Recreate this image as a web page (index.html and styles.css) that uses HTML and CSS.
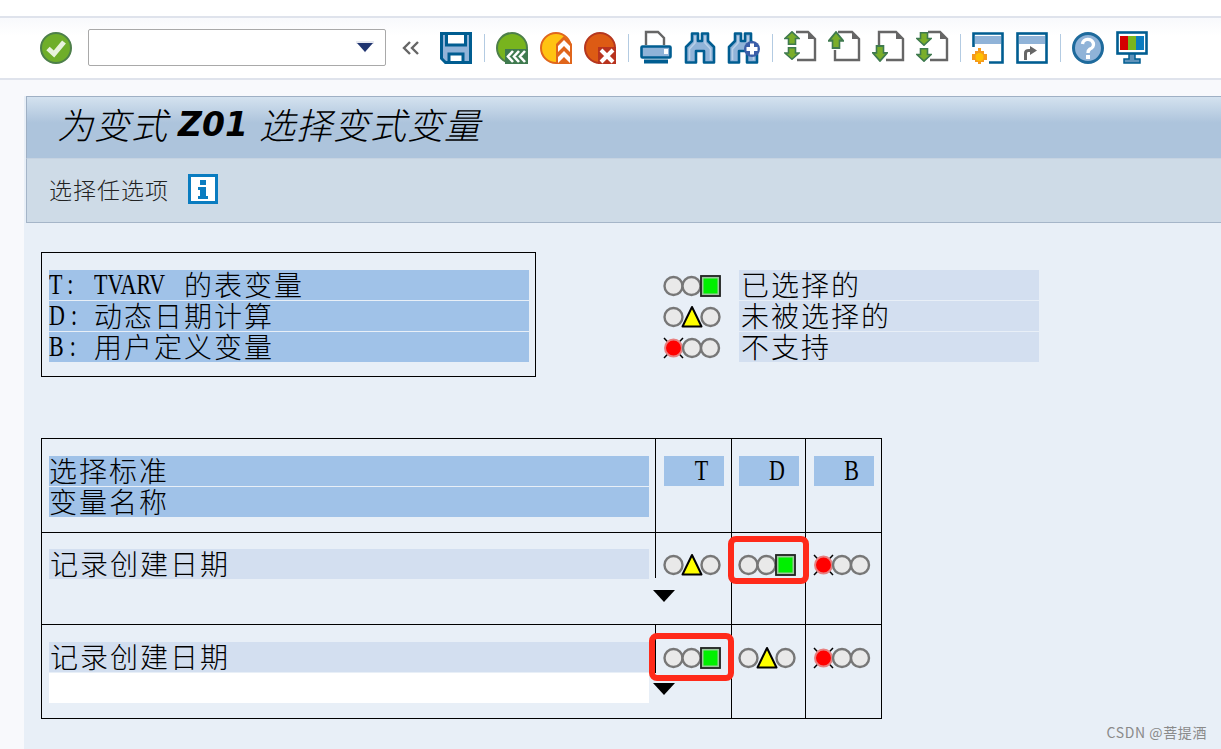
FILE: index.html
```html
<!DOCTYPE html>
<html lang="zh">
<head>
<meta charset="utf-8">
<title>为变式 Z01 选择变式变量</title>
<link rel="stylesheet" href="styles.css">
</head>
<body>
<svg class="defs" width="0" height="0" aria-hidden="true">
  <defs>
    <symbol id="up" viewBox="0 0 16 14" preserveAspectRatio="none"><path d="M8 .8 15.2 7.5H11.500V13.200H4.500V7.500H.8Z" fill="#7aae2a" stroke="#3f7a4f" stroke-width="1.6"/></symbol>
    <symbol id="down" viewBox="0 0 16 14" preserveAspectRatio="none"><path d="M8 13.2 15.2 6.5H11.500V.8H4.500V6.500H.8Z" fill="#7aae2a" stroke="#3f7a4f" stroke-width="1.6"/></symbol>
    <symbol id="binoc" viewBox="0 0 32 32"><path d="M8 1.500H14V9H18V1.500H24V9L30 15V30.500H20V19H12V30.500H2V15L8 9Z" fill="#90b3d8" stroke="#005d91" stroke-width="2.600" stroke-linejoin="round"/><path d="M11 4V11L5.500 17V28M21 4V11L26.500 17V28" fill="none" stroke="#b9d0e8" stroke-width="1.600"/></symbol>
    <symbol id="light-green" viewBox="0 0 58 24"><circle cx="10.500" cy="12" r="9" class="lamp"/><circle cx="28.500" cy="12" r="9" class="lamp"/><rect x="39" y="3" width="17" height="18" fill="#00f000" stroke="#9cc79c" stroke-width="3"/><rect x="38" y="2" width="19" height="20" fill="none" stroke="#222" stroke-width="1.800"/></symbol>
    <symbol id="light-yellow" viewBox="0 0 58 24"><circle cx="10.500" cy="12" r="9" class="lamp"/><circle cx="47.500" cy="12" r="9" class="lamp"/><path d="M29 2 38.500 21.500H19.500Z" fill="#ffff00" stroke="#000" stroke-width="2" stroke-linejoin="round"/></symbol>
    <symbol id="light-red" viewBox="0 0 58 24"><path d="M1 2 20 22M20 2 1 22" stroke="#000" stroke-width="1.500"/><circle cx="10.500" cy="12" r="8.500" fill="#ff0000" stroke="#e88080" stroke-width="2"/><circle cx="29" cy="12" r="9" class="lamp"/><circle cx="47" cy="12" r="9" class="lamp"/></symbol>
  </defs>
</svg>

<header class="toolbar">
  <svg class="ic" viewBox="0 0 32 32"><circle cx="16" cy="16" r="15" fill="#6fae2a" stroke="#4d7f4a" stroke-width="2"/><path d="M8 16.500 14 22 24 10" fill="none" stroke="#e9f3dd" stroke-width="5"/></svg>
  <div class="command">
    <svg class="drop" viewBox="0 0 18 12"><path d="M0 0H18V3H14L9 12 4 3H0Z" fill="#e7e9f0"/><path d="M1 2H17L9 11Z" fill="#1f3470"/></svg>
  </div>
  <svg class="back2" viewBox="0 0 18 14"><path d="M8 1 2 7 8 13M16 1 10 7 16 13" fill="none" stroke="#666" stroke-width="2.400"/></svg>
  <svg class="ic save" viewBox="0 0 32 32"><path d="M1.500 1.500H30.500V30.500H5.500L1.500 26.500Z" fill="#90b3d8" stroke="#005d91" stroke-width="3"/><path d="M6.500 1.500H25.500V13H6.500Z" fill="#fff" stroke="#005d91" stroke-width="3"/><path d="M9 22H23V30.500H9Z" fill="#fff" stroke="#005d91" stroke-width="3"/></svg>
  <span class="sep"></span>
  <svg class="ic" viewBox="0 0 32 32"><circle cx="16" cy="16" r="15" fill="#78b41e" stroke="#4d7f4a" stroke-width="2"/><path d="M9 17H32V32H9Z" fill="#3f7a4f"/><path d="M17 19 12 24.500 17 30M23 19 18 24.500 23 30M29 19 24 24.500 29 30" fill="none" stroke="#fff" stroke-width="2.600"/></svg>
  <svg class="ic" viewBox="0 0 32 32"><circle cx="16" cy="16" r="15" fill="#ffc312" stroke="#e0661c" stroke-width="2"/><path d="M16 12 24 4 32 12V32H16Z" fill="#e0661c"/><path d="M24 8 18 14V20L24 14 30 20V14ZM24 19 18 25V31L24 25 30 31V25Z" fill="#fff"/></svg>
  <svg class="ic" viewBox="0 0 32 32"><circle cx="16" cy="16" r="15" fill="#dd5b14" stroke="#b5371f" stroke-width="2"/><path d="M14 15H32V32H14Z" fill="#b8331e"/><path d="M17 18 29 30M29 18 17 30" stroke="#fff" stroke-width="4"/></svg>
  <span class="sep"></span>
  <svg class="ic" viewBox="0 0 32 32"><path d="M6 13V0H18L24 6V13" fill="none" stroke="#666" stroke-width="2.400"/><rect x="1.500" y="14.500" width="29" height="11" rx="1" fill="#90b3d8" stroke="#005d91" stroke-width="2.600"/><rect x="24" y="17" width="4" height="5" fill="#fff"/><rect x="4" y="27.500" width="24" height="4" fill="#005d91"/></svg>
  <svg class="ic"><use href="#binoc"/></svg>
  <svg class="ic" viewBox="0 0 32 32"><use href="#binoc" x="-1" y="0" width="32" height="32"/><circle cx="24" cy="17" r="8" fill="#3a5ea8"/><path d="M22 11.500h4v3.500h3.500v4H26v3.500h-4V19h-3.500v-4H22z" fill="#fff"/></svg>
  <span class="sep"></span>
  <svg class="ic" viewBox="0 0 32 32"><path d="M12 0H24L31 7V28H13" fill="none" stroke="#666" stroke-width="2.400"/><path d="M24 0 31 7H24Z" fill="#666"/><use href="#up" x="0" y="-1" width="16" height="14"/><use href="#down" x="0" y="15" width="16" height="13"/></svg>
  <svg class="ic" viewBox="0 0 32 32"><path d="M10 0H24L31 7V28H7V18" fill="none" stroke="#666" stroke-width="2.400"/><path d="M24 0 31 7H24Z" fill="#666"/><use href="#up" x="0" y="-1" width="16" height="18"/></svg>
  <svg class="ic" viewBox="0 0 32 32"><path d="M7 13V0H24L31 7V28H14" fill="none" stroke="#666" stroke-width="2.400"/><path d="M24 0 31 7H24Z" fill="#666"/><use href="#down" x="0" y="13" width="16" height="17"/></svg>
  <svg class="ic" viewBox="0 0 32 32"><path d="M12 0H24L31 7V28H14" fill="none" stroke="#666" stroke-width="2.400"/><path d="M24 0 31 7H24Z" fill="#666"/><use href="#down" x="0" y="0" width="16" height="14"/><use href="#down" x="0" y="16" width="16" height="14"/></svg>
  <span class="sep"></span>
  <svg class="ic" viewBox="0 0 32 32"><path d="M1.500 15V1.500H30.500V30.500H17" fill="none" stroke="#005d91" stroke-width="2.600"/><rect x="3" y="4" width="26" height="8" fill="#90b3d8"/><path d="M6 16h3v3h3v3h3v6h-3v2H9v2H6v-2H3v-2H0v-6h3v-3h3z" fill="#f59a1c"/><circle cx="7.500" cy="25" r="4" fill="#ffc000"/></svg>
  <svg class="ic" viewBox="0 0 32 32"><rect x="1.500" y="1.500" width="29" height="29" fill="#fff" stroke="#005d91" stroke-width="2.600"/><rect x="3" y="4" width="26" height="8" fill="#90b3d8"/><path d="M8 28V21Q8 17 13 17H14V14L21 18.500 14 23V20H12Q11 20 11 22V28Z" fill="#666"/></svg>
  <span class="sep"></span>
  <svg class="ic" viewBox="0 0 32 32"><circle cx="16" cy="16" r="14.500" fill="#90b3d8" stroke="#1e6a9c" stroke-width="3"/><path d="M10.500 12A5.500 5 0 1 1 18 17C16.500 18 16 19 16 21" fill="none" stroke="#fff" stroke-width="3.400"/><rect x="14" y="23" width="4" height="4" fill="#fff"/></svg>
  <svg class="ic" viewBox="0 0 32 32"><rect x="1.500" y="0.500" width="29" height="21" fill="#fff" stroke="#005d91" stroke-width="2.600"/><rect x="4" y="4" width="8" height="14" fill="#d40000"/><rect x="12" y="4" width="8" height="14" fill="#7ab51d"/><rect x="20" y="4" width="8" height="14" fill="#0a7cc0"/><path d="M13 22H19V27H24V31H8V27H13Z" fill="#5f93bb" stroke="#005d91" stroke-width="1.500"/></svg>
</header>

<div class="page">
  <section class="panel">
    <h1 class="title">
      <span class="title-cjk">为变式</span><span class="title-id">Z01</span><span class="title-cjk">选择变式变量</span>
    </h1>
    <div class="subbar">
      <span class="sub-text">选择任选项</span>
      <svg class="info" viewBox="0 0 30 30"><rect x="1.500" y="1.500" width="27" height="27" fill="#fff" stroke="#0a7cc0" stroke-width="3"/><rect x="12" y="6" width="6" height="5" fill="#0a7cc0"/><path d="M10 13H18V22H20V25H10V22H12V16H10Z" fill="#0a7cc0"/></svg>
    </div>

    <main class="content">
      <div class="top">
        <div class="key">
          <div class="bar bar-strong"><span class="latin prefix">T:</span><span class="latin word">TVARV</span>的表变量</div>
          <div class="bar bar-strong"><span class="latin prefix">D:</span>动态日期计算</div>
          <div class="bar bar-strong"><span class="latin prefix">B:</span>用户定义变量</div>
        </div>
        <div class="legend">
          <div class="legend-row"><svg class="light"><use href="#light-green"/></svg><div class="bar bar-soft legend-bar">已选择的</div></div>
          <div class="legend-row"><svg class="light"><use href="#light-yellow"/></svg><div class="bar bar-soft legend-bar">未被选择的</div></div>
          <div class="legend-row"><svg class="light"><use href="#light-red"/></svg><div class="bar bar-soft legend-bar">不支持</div></div>
        </div>
      </div>

      <div class="grid">
        <div class="cell name head">
          <div class="bar bar-strong head-bar">选择标准</div>
          <div class="bar bar-strong head-bar">变量名称</div>
        </div>
        <div class="cell col-t head"><div class="bar bar-strong col-bar"><span class="latin">T</span></div></div>
        <div class="cell col-d head"><div class="bar bar-strong col-bar"><span class="latin">D</span></div></div>
        <div class="cell col-b head end"><div class="bar bar-strong col-bar"><span class="latin">B</span></div></div>

        <div class="cell name row-a">
          <div class="bar bar-soft row-bar">记录创建日期</div>
          <div class="field"></div>
          <span class="cover"></span>
          <span class="arrow"></span>
        </div>
        <div class="cell col-t row-a"><svg class="light"><use href="#light-yellow"/></svg></div>
        <div class="cell col-d row-a mark-host"><svg class="light"><use href="#light-green"/></svg><span class="mark mark-d"></span></div>
        <div class="cell col-b row-a end"><svg class="light"><use href="#light-red"/></svg></div>

        <div class="cell name row-b last">
          <div class="bar bar-soft row-bar">记录创建日期</div>
          <div class="field field-white"></div>
          <span class="cover"></span>
          <span class="arrow"></span>
          <span class="mark mark-t"></span>
        </div>
        <div class="cell col-t row-b last"><svg class="light"><use href="#light-green"/></svg></div>
        <div class="cell col-d row-b last"><svg class="light"><use href="#light-yellow"/></svg></div>
        <div class="cell col-b row-b last end"><svg class="light"><use href="#light-red"/></svg></div>
      </div>
    </main>
  </section>
</div>
<div class="watermark">CSDN @菩提酒</div>
</body>
</html>
```

FILE: styles.css
```css
* { box-sizing: border-box; }

html, body {
  margin: 0;
  height: 749px;
  overflow: hidden;
}

body {
  position: relative;
  background: #fff;
  color: #000;
  font-family: "Noto Sans CJK SC", "Liberation Sans", sans-serif;
  padding-top: 16px;
  display: flex;
  flex-direction: column;
}

.defs { position: absolute; }
.lamp { fill: #e9e9e9; stroke: #777; stroke-width: 2.4; }

/* toolbar */
.toolbar {
  height: 64px;
  flex: none;
  display: flex;
  align-items: center;
  gap: 12px;
  padding-left: 40px;
  border-top: 2px solid #dfe3ec;
  border-bottom: 2px solid #dfe3ec;
  background: linear-gradient(#f8f9fc, #fff 30%);
}

.ic {
  width: 32px;
  height: 32px;
  flex: none;
  overflow: visible;
}

.command {
  width: 298px;
  height: 37px;
  margin-left: 4px;
  margin-top: -1px;
  display: flex;
  align-items: center;
  justify-content: flex-end;
  padding-right: 11px;
  background: #fff;
  border: 1px solid #a9a9a9;
  border-radius: 2px;
}

.drop { width: 18px; height: 12px; margin-top: -2px; }
.back2 { width: 18px; height: 14px; margin-left: 4px; margin-right: 8px; }

.sep {
  width: 1px;
  height: 28px;
  margin-right: -1px;
  background: #b3cbe2;
}

/* page */
.page {
  flex: 1;
  padding: 16px 0 0 24px;
  background: #f8f9fc;
}

.panel {
  height: 100%;
  background: #e8eff7;
}

.title {
  height: 63px;
  margin: 0 0 0 2px;
  padding: 0 0 9px 30px;
  display: flex;
  align-items: center;
  background: linear-gradient(#d4e2ef, #adc4dc 42%, #adc4dc);
  border: solid #9fb0c4;
  border-width: 1px 0 1px 1px;
  border-bottom-color: #c6d3e1;
  font-style: italic;
  font-weight: 300;
}

.title-cjk {
  font-size: 36px;
  letter-spacing: 1px;
  line-height: 42px;
}

.title-id {
  font-family: "DejaVu Sans", sans-serif;
  font-size: 33px;
  font-weight: 700;
  margin: 2px 11px 0 10px;
}

.subbar {
  height: 64px;
  margin-left: 2px;
  padding: 0 0 3px 22px;
  display: flex;
  align-items: center;
  gap: 19px;
  background: #cedbe7;
  border: solid #a5b5c8;
  border-width: 0 0 1px 1px;
}

.sub-text {
  font-size: 23px;
  letter-spacing: 1px;
  line-height: 30px;
  color: #222;
  font-weight: 300;
}

.info { width: 30px; height: 30px; flex: none; }

/* content */
.content { padding: 29px 0 0 17px; }

.top { display: flex; align-items: flex-start; }

.bar {
  height: 30px;
  line-height: 29px;
  font-size: 28px;
  letter-spacing: 2px;
  font-weight: 300;
  white-space: nowrap;
}

.bar-strong { background: #a0c2e8; }
.bar-soft { background: #d3dff0; }

/* narrow tall Latin, on the same 15px pitch as the CJK half-width cell */
.latin {
  display: inline-block;
  width: 15px;
  font-family: "Liberation Serif", serif;
  font-size: 22px;
  line-height: 30px;
  letter-spacing: 0;
  text-align: center;
  vertical-align: top;
  transform: scaleY(1.35);
}

.prefix { width: 45px; text-align: left; letter-spacing: 6px; }
.word { width: 90px; text-align: left; }

.key {
  width: 495px;
  height: 125px;
  padding: 17px 6px 0 7px;
  display: flex;
  flex-direction: column;
  gap: 1px;
  border: 1px solid #000;
}

.legend {
  margin: 18px 0 0 127px;
  display: flex;
  flex-direction: column;
  gap: 1px;
}

.legend-row { display: flex; align-items: center; gap: 18px; height: 30px; }
.legend-row .light { margin-top: 2px; }
.legend-bar { width: 300px; padding-left: 2px; }

.light { width: 58px; height: 24px; display: block; overflow: visible; }

/* selection table */
.grid {
  width: 841px;
  margin-top: 61px;
  display: grid;
  grid-template-columns: 614px 76px 74px 75px;
  grid-template-rows: 94px 92px 93px;
  border: 1px solid #000;
  height: 281px;
}

.cell {
  position: relative;
  border-right: 1px solid #000;
  border-bottom: 1px solid #000;
}

.cell.end { border-right: 0; }
.cell.last { border-bottom: 0; }

.name { padding-left: 7px; display: flex; flex-direction: column; }
.name.head { gap: 1px; padding-top: 17px; }
.name.row-a { padding-top: 16px; }
.name.row-b { padding-top: 17px; }

.head-bar { width: 600px; }
.row-bar { width: 600px; padding-left: 1px; }

.field { width: 600px; height: 30px; }
.field-white { background: #fff; margin-top: 1px; }

.col-t { padding-left: 7px; }
.col-d { padding-left: 6px; }
.col-b { padding-left: 7px; }
.head.col-t, .head.col-d, .head.col-b { padding-top: 17px; }
.row-a:not(.name) { padding-top: 20px; }
.row-b:not(.name) { padding-top: 21px; }

.col-bar {
  width: 60px;
  margin-left: 1px;
  text-align: right;
  padding-right: 15px;
}

/* items lying over the table */
.cover {
  position: absolute;
  right: -1px;
  width: 1px;
  bottom: 0;
  background: #e8eff7;
}

.row-a .cover { top: 45px; }
.row-b .cover { top: 48px; }

.arrow {
  position: absolute;
  left: 611px;
  width: 0;
  height: 0;
  border-left: 11px solid transparent;
  border-right: 11px solid transparent;
  border-top: 12px solid #000;
}

.row-a .arrow { top: 57px; }
.row-b .arrow { top: 58px; }

.mark {
  position: absolute;
  border: 6px solid #ff2a1a;
  border-radius: 8px;
  pointer-events: none;
}

.mark-d { left: -4px; top: 3px; width: 81px; height: 48px; }
.mark-t { left: 607px; top: 8px; width: 85px; height: 48px; z-index: 2; }

.watermark {
  position: absolute;
  right: 14px;
  bottom: 9px;
  font-size: 14px;
  letter-spacing: .6px;
  line-height: 16px;
  color: #8a8a8a;
}
```
